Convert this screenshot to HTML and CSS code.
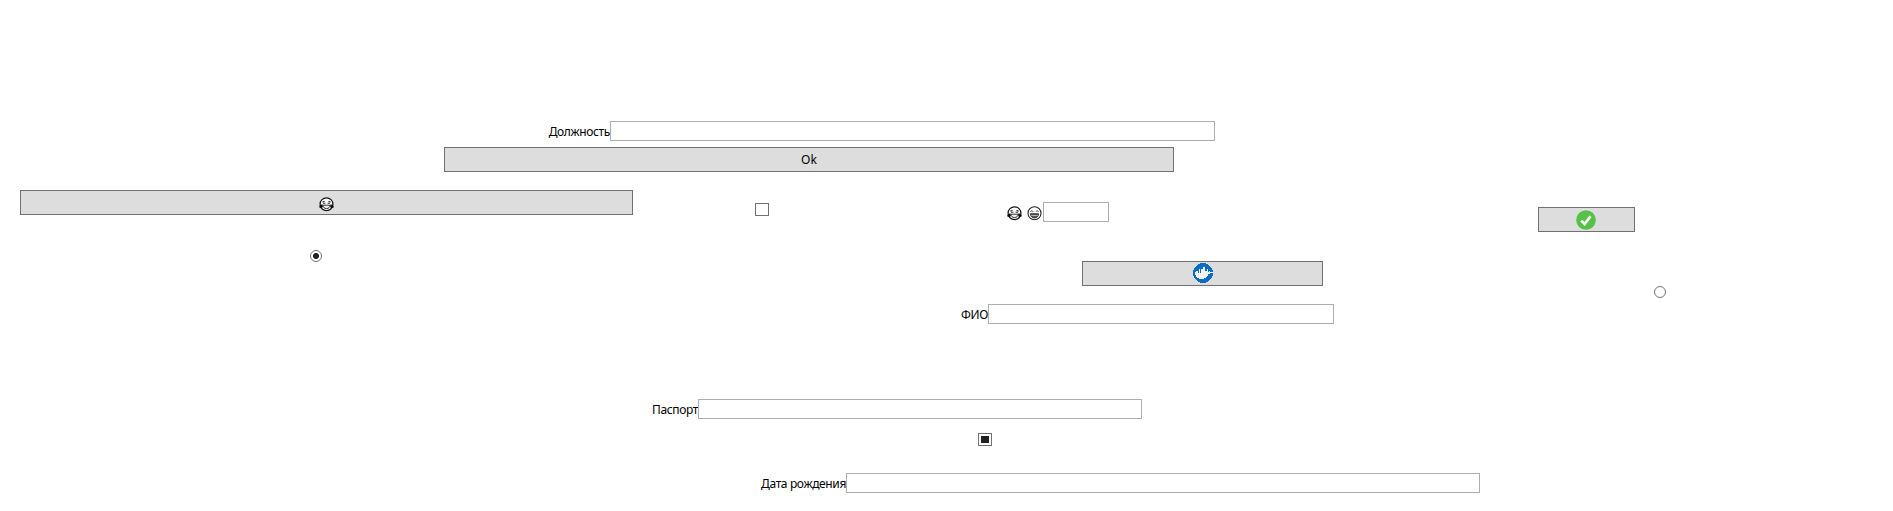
FILE: index.html
```
<!DOCTYPE html>
<html lang="ru">
<head>
<meta charset="utf-8">
<title>Форма</title>
<link rel="stylesheet" href="styles.css">
</head>
<body>
<svg class="defs" aria-hidden="true">
  <symbol id="joy" viewBox="0 0 15 15">
    <circle cx="7.5" cy="7.2" r="6.4" fill="#fff" stroke="#161616" stroke-width="1.25"/>
    <path d="M3.300 5 5.600 4.400M9.400 4.400l2.300.6M4 6.200h2.400M8.600 6.200H11" stroke="#222" stroke-width="1" fill="none"/>
    <path d="M4 8.200h7c0 2-1.300 3.400-3.500 3.400S4 10.200 4 8.200z" fill="#eee" stroke="#222" stroke-width=".9"/>
    <path d="M3.400 7.200C1.300 7.700.1 8.700.3 10.100c.3 1.300 2.900 1.200 3.400-.2.200-.8 0-1.900-.3-2.700zM11.600 7.200c2.100.5 3.300 1.500 3.100 2.900-.3 1.300-2.900 1.200-3.400-.2-.2-.8 0-1.900.3-2.700z" fill="#0c0c0c"/>
  </symbol>
  <symbol id="grin" viewBox="0 0 15 15">
    <circle cx="7.500" cy="7.200" r="6.500" fill="#fff" stroke="#252525" stroke-width="1.100"/>
    <path d="M3.500 5.700c.6-1.200 1.900-1.200 2.500 0M9 5.700c.6-1.200 1.900-1.200 2.500 0" stroke="#333" fill="none"/>
    <path d="M3.400 7.700h8.200c0 2.600-1.600 4.200-4.100 4.200s-4.100-1.600-4.100-4.200z" fill="#555" stroke="#222" stroke-width=".8"/>
    <path d="M4.200 9.500h6.600" stroke="#ccc" stroke-width=".8"/>
  </symbol>
</svg>
<main class="form">
  <label class="pair position"><span class="caption">Должность</span><input class="field" type="text"></label>
  <button class="btn ok">Ok</button>
  <div class="columns">
    <div class="col-left">
      <button class="btn joy-btn" aria-label="joy"><svg class="emoji"><use href="#joy"/></svg></button>
      <span class="radio radio-on"></span>
    </div>
    <span class="check check-off"></span>
    <div class="col-center">
      <div class="emoji-row">
        <svg class="emoji"><use href="#joy"/></svg>
        <svg class="emoji"><use href="#grin"/></svg>
        <input class="field" type="text">
      </div>
      <button class="btn whale-btn" aria-label="docker">
        <svg class="badge" viewBox="0 0 20 20" shape-rendering="crispEdges">
          <circle cx="10" cy="10" r="10" fill="#0a6cc4"/>
          <path d="M2 9h1V8h2v2h1V6h1v4h1V6h2V4h2v4h2V6h1v3h1V8h1v1h3v1h-3v1h-2v2h-1v1h-1v1h-2v1H6v-1H4v-1H3v-2H2z" fill="#f3f3f3"/>
        </svg>
      </button>
      <label class="pair name"><span class="caption">ФИО</span><input class="field" type="text"></label>
    </div>
    <div class="col-right">
      <button class="btn done-btn" aria-label="check">
        <svg class="badge" viewBox="0 0 20 20">
          <circle cx="10" cy="10" r="9.800" fill="#55c149"/>
          <path d="M5.200 10.600 8.600 14 14.500 6.200" fill="none" stroke="#fff" stroke-width="2.700"/>
        </svg>
      </button>
      <span class="radio radio-off"></span>
    </div>
  </div>
  <label class="pair passport"><span class="caption">Паспорт</span><input class="field" type="text"></label>
  <span class="check check-mixed"></span>
  <label class="pair birth"><span class="caption">Дата рождения</span><input class="field" type="text"></label>
</main>
</body>
</html>
```
FILE: styles.css
```
* { box-sizing: border-box; }
body {
  margin: 0;
  background: #fff;
  color: #000;
  font: 12px/16px "Noto Sans", "Open Sans", sans-serif;
}
.defs { display: none; }
.form {
  display: flex;
  flex-direction: column;
  align-items: flex-start;
  width: 1893px;
  height: 511px;
  padding-top: 121px;
}
.pair { display: flex; height: 20px; }
.caption {
  flex: none;
  text-align: right;
  white-space: nowrap;
  padding-top: 3px;
  letter-spacing: -0.36px;
}
.field {
  height: 20px;
  margin: 0;
  padding: 0 3px;
  border: 1px solid #abadb3;
  border-radius: 0;
  background: #fff;
  outline: none;
  font: inherit;
}
.btn {
  display: flex;
  justify-content: center;
  height: 25px;
  margin: 0;
  padding: 0;
  border: 1px solid #707070;
  border-radius: 0;
  background: #ddd;
  color: #000;
  font: inherit;
  line-height: 23px;
}
.emoji { display: block; flex: none; width: 15px; height: 15px; }
.badge { display: block; flex: none; width: 20px; height: 20px; }
.position .caption { width: 610px; }
.ok { width: 730px; margin: 6px 0 0 444px; }
.position .field { width: 605px; }
.columns {
  display: flex;
  align-items: flex-start;
  height: 134px;
  margin-top: 18px;
}
.col-left { width: 613px; margin-left: 20px; }
.joy-btn { width: 613px; align-items: flex-start; padding: 6px 1px 0 0; }
.radio {
  display: block;
  width: 12px;
  height: 12px;
  border: 1px solid #707070;
  border-radius: 50%;
}
.radio-on {
  margin: 35px 0 0 290px;
  background: radial-gradient(circle at center, #212121 0 2.700px, #fff 3.300px);
}
.check { display: block; width: 14px; height: 13px; border: 1px solid #707070; }
.check-off { margin: 13px 0 0 122px; }
.col-center { width: 374px; margin: 12px 0 0 191px; }
.emoji-row { display: flex; align-items: flex-start; padding-left: 47px; }
.emoji-row .emoji { margin-top: 4px; }
.emoji-row .emoji + .emoji { margin: 4px 1px 0 5px; }
.emoji-row .field { width: 66px; }
.whale-btn { width: 241px; margin: 39px 0 0 122px; align-items: flex-start; padding-top: 1px; }
.name { margin-top: 18px; }
.name .caption { width: 28px; }
.name .field { width: 346px; }
.col-right { width: 128px; margin: 17px 0 0 204px; }
.done-btn { width: 97px; align-items: flex-start; padding: 2px 1px 0 0; }
.radio-off { margin: 54px 0 0 116px; }
.passport { margin-top: 75px; }
.passport .caption { width: 698px; }
.passport .field { width: 444px; }
.check-mixed {
  margin: 14px 0 0 978px;
  padding: 2px;
  background: #212121 content-box;
}
.birth { margin-top: 27px; }
.birth .caption { width: 846px; }
.birth .field { width: 634px; }
```
